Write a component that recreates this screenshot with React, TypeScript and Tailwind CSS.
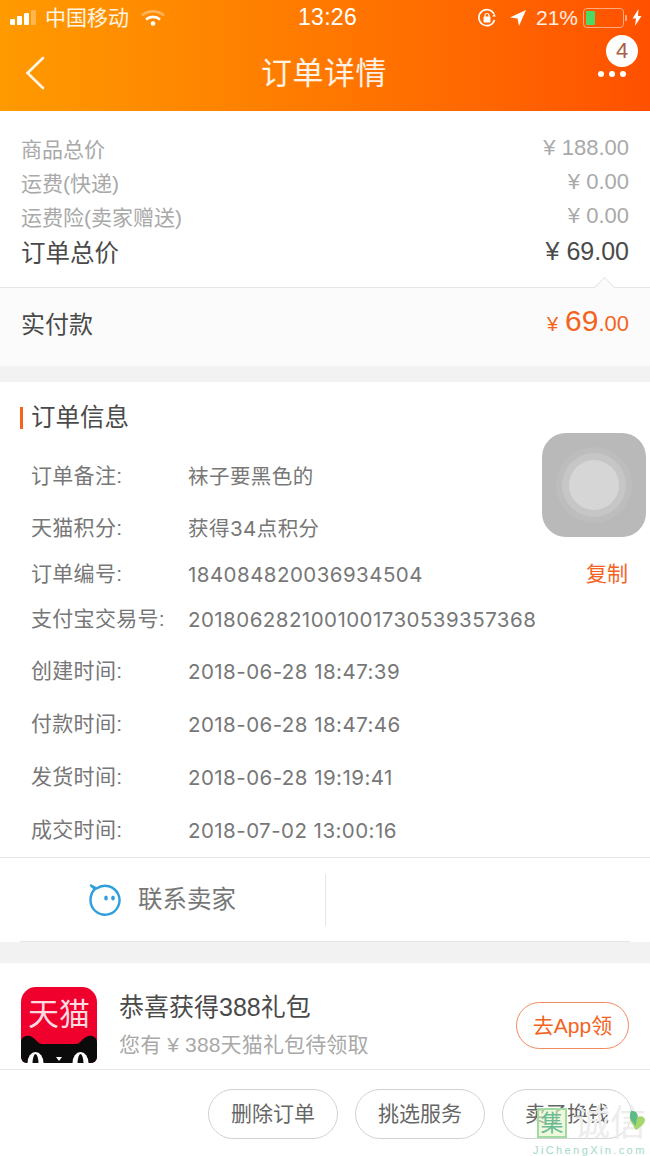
const priceRows = [
  { label: '商品总价', value: '¥ 188.00' },
  { label: '运费(快递)', value: '¥ 0.00' },
  { label: '运费险(卖家赠送)', value: '¥ 0.00' },
];

const infoRows = [
  { label: '订单备注:', value: '袜子要黑色的', h: 'h-[52px]' },
  { label: '天猫积分:', value: '获得34点积分', h: 'h-[53px]' },
  { label: '订单编号:', value: '184084820036934504', h: 'h-[38px]', copy: true },
  { label: '支付宝交易号:', value: '2018062821001001730539357368', h: 'h-[52px]' },
  { label: '创建时间:', value: '2018-06-28 18:47:39', h: 'h-[53px]' },
  { label: '付款时间:', value: '2018-06-28 18:47:46', h: 'h-[53px]' },
  { label: '发货时间:', value: '2018-06-28 19:19:41', h: 'h-[53px]' },
  { label: '成交时间:', value: '2018-07-02 13:00:16', h: 'h-[53px]' },
];

function StatusBar() {
  return (
    <div className="h-[35px] flex items-center justify-between pl-[10px] pr-[8px] text-white">
      <div className="flex items-center w-[200px]">
        <div className="flex items-end gap-[2px] h-[15px]">
          <span className="w-[5px] h-[6px] rounded-[1px] bg-white" />
          <span className="w-[5px] h-[9px] rounded-[1px] bg-white" />
          <span className="w-[5px] h-[12px] rounded-[1px] bg-white" />
          <span className="w-[5px] h-[15px] rounded-[1px] bg-white/30" />
        </div>
        <span className="ml-[9px] text-[21px] leading-none text-white/90">中国移动</span>
        <svg className="ml-[12px]" width="24" height="16" viewBox="0 0 24 16" fill="none">
          <path d="M1 5.5C7 0 17 0 23 5.5" stroke="#fff" strokeOpacity="0.35" strokeWidth="2.6" />
          <path d="M5 9.5C9 6 15 6 19 9.5" stroke="#fff" strokeWidth="2.6" />
          <circle cx="12" cy="13.5" r="2.3" fill="#fff" />
        </svg>
      </div>
      <span className="ml-[3px] text-[23px] leading-none tracking-[0.3px]">13:26</span>
      <div className="flex items-center justify-end w-[200px]">
        <svg width="20" height="20" viewBox="0 0 20 20" fill="none">
          <path d="M17.5 12A8 8 0 1 1 17 6" stroke="#fff" strokeWidth="1.6" />
          <path d="M18.8 8.5h-3.4l1.8-3z" fill="#fff" />
          <rect x="6.5" y="8.5" width="7" height="6" rx="1" fill="#fff" />
          <path d="M8 9V7.5a2 2 0 0 1 4 0V9" stroke="#fff" strokeWidth="1.2" />
        </svg>
        <svg className="ml-[12px]" width="18" height="18" viewBox="0 0 18 18">
          <path d="M17 1L1 8.5l7.5 1L10 17z" fill="#fff" />
        </svg>
        <span className="ml-[9px] text-[21px] leading-none text-white/90">21%</span>
        <div className="ml-[5px] w-[41px] h-[20px] rounded-[4px] border border-white/50 p-[2px]">
          <div className="w-[9px] h-full rounded-[1px] bg-[#4cd964]" />
        </div>
        <span className="ml-[1px] w-[2px] h-[6px] rounded-r-[1px] bg-white/50" />
        <svg className="ml-[5px]" width="10" height="17" viewBox="0 0 10 17">
          <path d="M6.5 0L0.5 9.5h3.5L3 17l6.5-10H6z" fill="#fff" />
        </svg>
      </div>
    </div>
  );
}

function NavBar() {
  return (
    <div className="relative h-[76px] flex items-center justify-between pl-[25px] pr-[24px] text-white">
      <svg className="mb-[1px]" width="20" height="34" viewBox="0 0 20 34" fill="none">
        <path d="M18 2L2.5 17 18 32" stroke="#fff" strokeOpacity="0.92" strokeWidth="2.6" strokeLinecap="round" />
      </svg>
      <span className="ml-[5px] text-[31px] tracking-[0.5px] leading-none text-white/90">订单详情</span>
      <div className="flex gap-[5px] mt-[1px] items-center">
        <span className="w-[6px] h-[6px] rounded-full bg-white" />
        <span className="w-[6px] h-[6px] rounded-full bg-white" />
        <span className="w-[6px] h-[6px] rounded-full bg-white" />
      </div>
      <span className="absolute right-[12px] top-0 w-[32px] h-[32px] rounded-full bg-white flex items-center justify-center text-[22px] leading-none text-[#a8603f]">
        4
      </span>
    </div>
  );
}

function TmallIcon() {
  return (
    <div className="relative w-[76px] h-[76px] rounded-t-[15px] rounded-b-[6px] overflow-hidden bg-[#f0002d] shrink-0">
      <span className="absolute left-0 right-0 top-[10px] text-center text-[31px] leading-[36px] text-[#ffdbe0] whitespace-nowrap">天猫</span>
      <svg className="absolute left-0 bottom-0" width="76" height="28" viewBox="0 0 76 28">
        <path d="M0 28V7C0 2 6 -1 11 2C15 4 17 9 21 9H55C59 9 61 4 65 2C70 -1 76 2 76 7V28Z" fill="#0b0b0b" />
        <ellipse cx="14.5" cy="28" rx="8" ry="11" fill="#fff" />
        <ellipse cx="59.5" cy="28" rx="8" ry="11" fill="#fff" />
        <ellipse cx="14.5" cy="29" rx="3" ry="10" fill="#0b0b0b" />
        <ellipse cx="59.5" cy="29" rx="3" ry="10" fill="#0b0b0b" />
        <path d="M35 22h6l-3 4z" fill="#fff" />
      </svg>
    </div>
  );
}

function Watermark() {
  return (
    <div className="absolute left-[533px] top-[1106px] w-[117px] h-[50px] pointer-events-none">
      <div className="absolute left-[4px] top-[2px] w-[30px] h-[30px] bg-[#e2f5c4]/60 border-2 border-[#a3d9a5] flex items-center justify-center text-[23px] leading-none text-[#6bbb96]">
        集
      </div>
      <span className="absolute left-[41px] top-0 text-[36px] leading-none text-[#ededed] whitespace-nowrap">诚信</span>
      <svg className="absolute left-[95px] top-[4px]" width="19" height="21" viewBox="0 0 22 28">
        <path d="M3 1C9 1 12 6 11 10C14 7 20 8 21 13C21 20 12 24 9 27C5 20 0 14 1 7C1 4 2 2 3 1Z" fill="#a5d76e" />
        <path d="M3 1C9 1 12 6 11 10C9 14 9 18 9 21C5 17 0 12 1 7C1 4 2 2 3 1Z" fill="#5fb98a" />
      </svg>
      <span className="absolute left-[0px] top-[39px] text-[11px] leading-none tracking-[2.4px] text-[#a3d8c8] whitespace-nowrap">JiChengXin.com</span>
    </div>
  );
}

export default function App() {
  return (
    <div
      className="relative w-[650px] h-[1156px] overflow-hidden bg-[#f2f2f2] text-[#555]"
      style={{ fontFamily: '"Liberation Sans", "Noto Sans CJK SC", sans-serif' }}
    >
      {/* 顶部 */}
      <div className="h-[111px] bg-gradient-to-r from-[#ff9a00] to-[#ff5000]">
        <StatusBar />
        <NavBar />
      </div>

      {/* 价格 */}
      <div className="h-[176px] bg-white pt-[22px] px-[21px]">
        {priceRows.map((row) => (
          <div key={row.label} className="h-[34px] flex items-center justify-between">
            <span className="mb-[2px] text-[21px] leading-none text-[#a9a9a9]">{row.label}</span>
            <span className="mb-[5px] text-[22px] leading-none text-[#a9a9a9]">{row.value}</span>
          </div>
        ))}
        <div className="h-[38px] flex items-center justify-between">
          <span className="mt-[1px] text-[24.5px] leading-none text-[#4a4a4a]">订单总价</span>
          <span className="mb-[6px] text-[25px] leading-none text-[#4a4a4a]">¥ 69.00</span>
        </div>
      </div>

      {/* 实付款 */}
      <div className="relative h-[79px] bg-[#fbfbfb] border-t border-[#e5e5e5] px-[21px] flex items-center justify-between pb-[5px]">
        <span className="absolute right-[38px] top-[-8px] w-[15px] h-[15px] rotate-45 bg-[#fbfbfb] border-l border-t border-[#e5e5e5]" />
        <span className="text-[24px] leading-none text-[#4a4a4a]">实付款</span>
        <div className="mb-[7px] flex items-baseline text-[#f4631e] leading-none">
          <span className="text-[20px] mr-[7px]">¥</span>
          <span className="text-[30px]">69</span>
          <span className="text-[22px]">.00</span>
        </div>
      </div>

      {/* 订单信息 */}
      <div className="mt-[16px] h-[475px] bg-white">
        <div className="h-[68px] flex items-center pl-[20px] pt-[4px]">
          <span className="w-[3px] h-[22px] bg-[#f4631e]" />
          <span className="ml-[8px] text-[24.5px] leading-none text-[#4a4a4a]">订单信息</span>
        </div>
        {infoRows.map((row) => (
          <div key={row.label} className={`${row.h} flex items-center pl-[31px] pr-[22px] text-[21px] leading-none text-[#777]`}>
            <span className="mb-[2px] w-[157px] shrink-0 whitespace-nowrap tracking-[0.3px]">{row.label}</span>
            <span className="mt-[2px] flex-1 whitespace-nowrap text-[20.5px] tracking-[0.45px]" style={{ fontFamily: 'Inter, "Noto Sans CJK SC", sans-serif' }}>{row.value}</span>
            {row.copy && <span className="mb-[2px] text-[#f4631e]">复制</span>}
          </div>
        ))}
      </div>

      {/* 联系卖家 */}
      <div className="h-[85px] bg-white border-t border-[#e5e5e5]">
        <div className="h-[84px] mx-[20px] border-b border-[#e5e5e5] flex items-center">
          <div className="w-[306px] h-[52px] border-r border-[#e5e5e5] flex items-center pl-[69px]">
            <svg className="mr-[16px]" width="33" height="34" viewBox="0 0 33 34" fill="none">
              <path d="M6 6C2.5 9 1.5 12.5 1.5 17.5A14.5 14.5 0 1 0 7.5 5.5L2 2.5Z" stroke="#2e9fdc" strokeWidth="2.4" strokeLinejoin="round" />
              <ellipse cx="17" cy="15" rx="1.8" ry="2.6" fill="#2e9fdc" />
              <ellipse cx="24" cy="15" rx="1.8" ry="2.6" fill="#2e9fdc" />
            </svg>
            <span className="mt-[1px] text-[24.5px] leading-none text-[#777] whitespace-nowrap">联系卖家</span>
          </div>
        </div>
      </div>

      {/* 天猫礼包 */}
      <div className="mt-[21px] h-[107px] bg-white border-b border-[#e8e8e8] flex pl-[21px] pr-[21px] pt-[24px]">
        <TmallIcon />
        <div className="ml-[22px] flex-1">
          <div className="mt-[8px] text-[25px] leading-none text-[#4a4a4a]">恭喜获得388礼包</div>
          <div className="mt-[14px] text-[21px] tracking-[0.15px] leading-none text-[#a9a9a9]">您有 ¥ 388天猫礼包待领取</div>
        </div>
        <div className="mt-[15px] w-[113px] h-[47px] rounded-full border border-[#f08a5d] flex items-center justify-center text-[21px] leading-none text-[#f4631e]">
          去App领
        </div>
      </div>

      {/* 底部按钮 */}
      <div className="h-[86px] bg-white flex justify-end gap-[17px] pr-[18px] pt-[19px]">
        {['删除订单', '挑选服务', '卖了换钱'].map((text) => (
          <div key={text} className="w-[130px] h-[50px] rounded-full border border-[#d2d2d2] flex items-center justify-center pb-[2px] text-[21px] leading-none text-[#666]">
            {text}
          </div>
        ))}
      </div>

      {/* 悬浮球 */}
      <div className="absolute left-[542px] top-[433px] w-[104px] h-[104px] rounded-[24px] bg-[#b9b9b9] flex items-center justify-center">
        <div className="w-[76px] h-[76px] rounded-full bg-[#bdbdbd] flex items-center justify-center">
          <div className="w-[64px] h-[64px] rounded-full bg-[#c6c6c6] flex items-center justify-center">
            <div className="w-[50px] h-[50px] rounded-full bg-[#d6d6d6]" />
          </div>
        </div>
      </div>

      <Watermark />
    </div>
  );
}
